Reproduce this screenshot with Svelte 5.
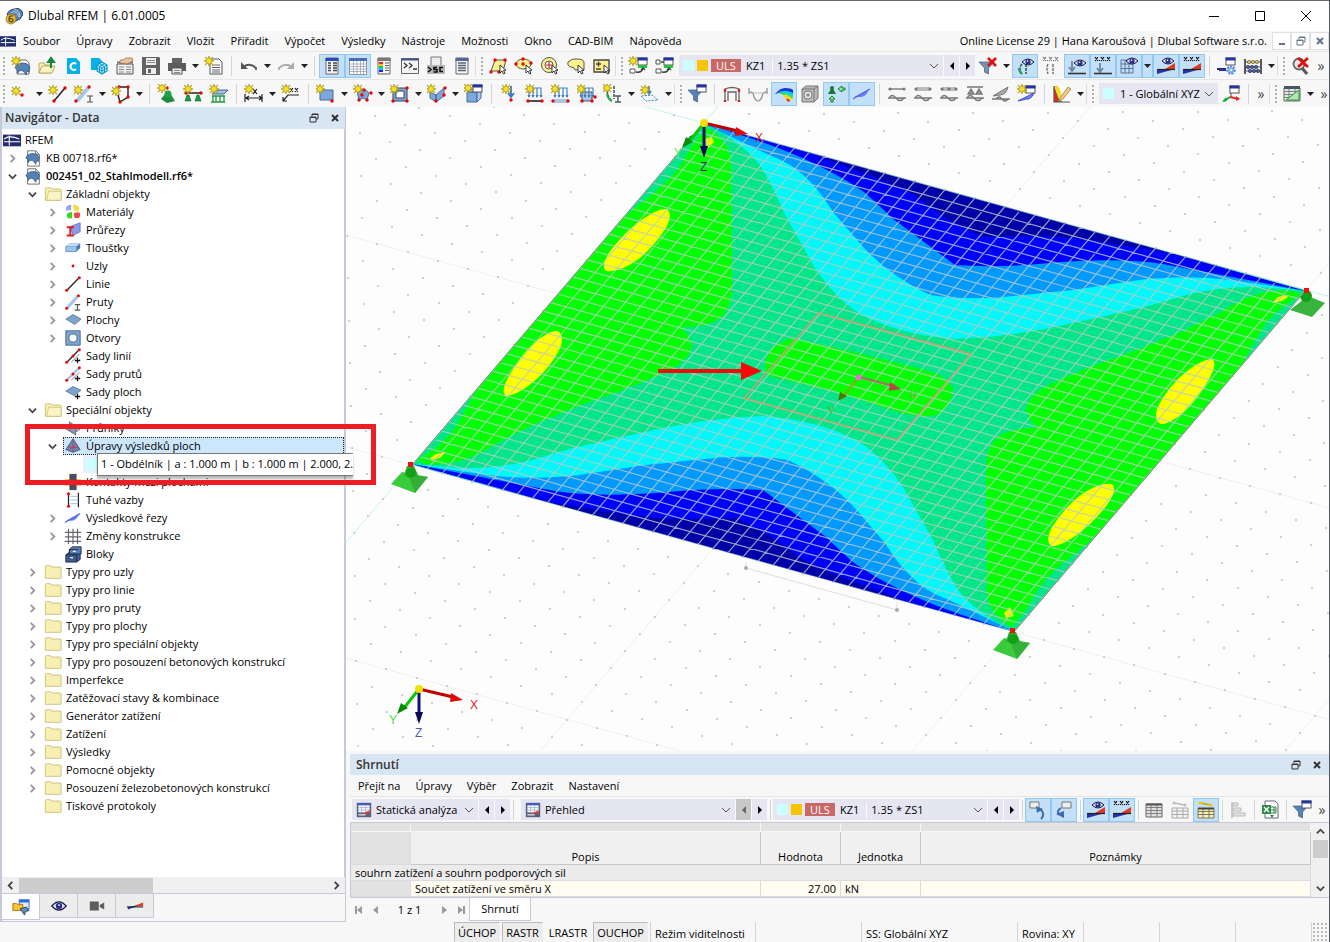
<script lang="ts">
	interface Tool {
		kind: string;
		icon?: string;
		on?: boolean;
	}

	interface Row {
		level: number;
		icon: string;
		label: string;
		state?: 'open' | 'closed';
		bold?: boolean;
		selected?: boolean;
	}

	// --- icon building blocks, all on a 20 x 20 grid ---
	const star = (x: number, y: number) =>
		`<path transform="translate(${x} ${y})" d="M0-5 1-2 4-4 2-1 5 0 2 1 4 4 1 2 0 5-1 2-4 4-2 1-5 0-2-1-4-4-1-2Z" fill="#f6e020" stroke="#a89418" stroke-width=".7"/>`;
	const dot = (x: number, y: number) => `<circle cx="${x}" cy="${y}" r="1.7" fill="#e00808"/>`;
	const dots = (...p: number[][]) => p.map(([x, y]) => dot(x, y)).join('');
	const win = (x: number, y: number) =>
		`<rect x="${x}" y="${y}" width="9" height="7" fill="#fff" stroke="#555"/><path d="M${x - 0.5} ${y + 1}h10" stroke="#2434a0" stroke-width="3"/>`;
	const cursor = (x: number, y: number) =>
		`<path transform="translate(${x} ${y})" d="M0 0v8l2-2 1.5 3 1.5-.7-1.5-3H6Z" fill="#fff" stroke="#222" stroke-width=".9"/>`;
	const eye = (x: number, y: number) =>
		`<path transform="translate(${x} ${y})" d="M-6 0Q0-6 6 0 0 6-6 0Z" fill="#dfe2f4" stroke="#181840"/><circle cx="${x}" cy="${y}" r="2.6" fill="#263090"/><circle cx="${x - 0.5}" cy="${y - 0.8}" r=".8" fill="#fff"/>`;
	const xxx = (c = '#111') =>
		`<path d="m2 1 3 4m0-4-3 4m6-4 3 4m0-4-3 4m6-4 3 4m0-4-3 4" stroke="${c}" stroke-width="1.2"/><path d="M6 4h1v1H6zm6 0h1v1h-1z" fill="${c}"/>`;
	const wedge = '<path d="M1 18v-5h18Z" fill="#2434b0"/><path d="M9 13 19 7v6Z" fill="#e03a20"/><path d="M1 13.5h18" stroke="#222" stroke-width="1.2"/>';
	const arrows = '<path d="M4 13V4h12v9M8 4v9m4-9v9" fill="none" stroke="#4a84c8" stroke-width="1.2"/><path d="m2.500 11 1.500 3 1.500-3m1 0L8 14l1.500-3m1 0 1.500 3 1.500-3m1 0 1.500 3 1.500-3" fill="#3a78c0"/>';
	const funnel = (c = '#5580b8') => `<path d="M1 6h15l-5.500 6v6l-4-2v-4Z" fill="${c}" stroke="#4a6a98" stroke-width=".8"/>`;
	const page = (tone: string) =>
		`<path d="M4 2h12v16H4Z" fill="#f4f4f4" stroke="#667"/><path d="M3.5 3.5h13" stroke="${tone}" stroke-width="3"/>`;
	const leaf = '<path d="M2 9q2-5 8-5 5 0 7 4l-1 5-2-1-1 4q-3-6-7-4l-1 2-1-4Z" fill="#5581b5" stroke="#34557f" stroke-width=".8"/>';
	const folder = (c = '#f8efb4') =>
		`<path d="M1.5 5.500V4q0-1 1-1h5l1.500 1.500h9q1 0 1 1v11q0 .5-.5.5h-17Z" fill="${c}" stroke="#c9bd72"/>`;
	const wave = '<path d="M1 14h18M2 14q3-5 7 0t8 0" fill="none" stroke="#777" stroke-width="1.400"/>';
	const cone = (x: number, y: number) =>
		`<path d="M${x - 3} ${y + 6} ${x - 1} ${y}h2l2 6Z" fill="#1f9a44" stroke="#0f6228" stroke-width=".6"/>`;
	const table = (c: string) =>
		`<path d="M2 4h16v13H2Z" fill="${c}" stroke="#666"/><path d="M2 7.500h16M2 10.500h16M2 13.500h16M7 4v13m6-13v13" stroke="#777" stroke-width=".9"/>`;
	const mesh = '<path d="M2 4h12v13H2Zm0 4h12M2 12.500h12M6 4v13m4-13v13" fill="#c3dbf4" stroke="#4c6c94" stroke-width=".9"/>';

	const icons: Record<string, string> = {
		newModel: `<path d="M6 4h9l3 3v11H6Z" fill="#fff" stroke="#666"/><g transform="translate(2 3)">${leaf}</g>${star(5, 5)}`,
		open: '<path d="M2 17V8q0-1 1-1h4l1 2h6v8Z" fill="#f8efb4" stroke="#b8ab5c"/><path d="M2 17 5 10h13l-3 7Z" fill="#fbf4c4" stroke="#b8ab5c"/><path d="M14 12V5M11 6l3-4 3 4Z" stroke="#16883c" stroke-width="2" fill="#16883c"/>',
		cloud: '<path d="M4 2h9l4 4v12H4Z" fill="#06b0e8"/><path d="M13 8a3.300 3.300 0 1 0 0 5" fill="none" stroke="#fff" stroke-width="2"/>',
		cloudModel: '<path d="M2 2h8l3 3v9H2Z" fill="#06b0e8"/><path d="m13 6 5 3v6l-5 3-5-3V9Z" fill="#bdeaf8" stroke="#0b98cc" stroke-width="1.200"/><path d="m8 9 5 3 5-3m-5 3v6M10.500 7.500l5 3v6m0-9-5 3v6M8 12l5 3 5-3" stroke="#0b98cc" fill="none"/>',
		template: '<path d="M2 8h16v10H2Z" fill="#f0f0f0" stroke="#555"/><path d="M2 6.500h16" stroke="#777" stroke-width="2"/><path d="M4 11h5m-5 2.500h5M4 16h5m2-5h5m-5 2.500h5m-5 2.500h5" stroke="#888"/><path d="M5 7q-1-4 3-3l3-2h6l1 3-6 3Z" fill="#eec39c" stroke="#8a6242" stroke-width=".7"/>',
		save: '<path d="M1 1h17l1 1v17H1Z" fill="#636363"/><path d="M5 2h10v7H5Zm0 10h10v6H5Z" fill="#eee"/><path d="M6 4.500h8M6 6.500h8" stroke="#888"/><path d="M7 13h3v4H7Z" fill="#636363"/>',
		print: '<path d="M5 2h10v5H5Z" fill="#666"/><path d="M1 7h18v8H1Z" fill="#5c5c5c"/><path d="M5 12h10v6H5Z" fill="#eee" stroke="#555"/><path d="M7 14.500h6M7 16.500h6" stroke="#888"/>',
		newReport: `<path d="M6 3h9l3 3v12H6Z" fill="#fff" stroke="#555"/><path d="M8 9h8m-8 2.500h8M8 14h8m-8 2h8" stroke="#666"/>${star(5, 5)}`,
		undo: '<path d="M4 11q7-5 13 1v2" fill="none" stroke="#555" stroke-width="1.800"/><path d="M2 6v7h7Z" fill="#555"/>',
		redo: '<path d="M16 11q-7-5-13 1v2" fill="none" stroke="#aaa" stroke-width="1.800"/><path d="M18 6v7h-7Z" fill="#aaa"/>',
		navPanel: `${page('#2b49b8')}<path d="M6 7h3m2 0h4M6 9.500h3m2 0h4M6 12h3m2 0h4m-9 2.500h3m2 0h4" stroke="#444" stroke-width="1.300"/>`,
		tablePanel: '<path d="M1.500 2.500h17v16h-17Z" fill="#fff" stroke="#8a98a8"/><path d="M1 3.500h18" stroke="#4a6cb8" stroke-width="3"/><path d="M2 8h16M2 10.500h16M2 13h16M2 15.500h16M5.500 5v13M9 5v13m3.500-13v13m3-13v13" stroke="#9aa4b0" stroke-width=".8"/>',
		colorPanel: `${page('#777')}<path d="M5 6h4v2H5Z" fill="#e22"/><path d="M5 8h4v2H5Z" fill="#fc0"/><path d="M5 10h4v2H5Z" fill="#1c4"/><path d="M5 12h4v2H5Z" fill="#0cf"/><path d="M5 14h4v2H5Z" fill="#22d"/><path d="M11 7h4m-4 2.500h4M11 12h4m-4 2.500h4" stroke="#666"/>`,
		console: '<path d="M1.500 2.500h17v15h-17Z" fill="#f4f4f4" stroke="#666"/><path d="M1 3.500h18" stroke="#445490" stroke-width="2"/><path d="m4 7 3 2.500L4 12m5-5 3 2.500L9 12m4 1h4" fill="none" stroke="#333" stroke-width="1.300"/>',
		script: '<path d="M5 1h10v9H5Z" fill="#eee" stroke="#777"/><path d="M1 9h18v9H1Z" fill="#b8b8b8"/><path d="m2 11 3 2.500L2 16M11 11.500H8v2h3v2.500H7.500M17 11.500h-3v4h3" fill="none" stroke="#111" stroke-width="1.600"/>',
		listPanel: `${page('#5468a0')}<path d="M6 7h8m-8 2.500h8M6 12h8m-8 2.500h8" stroke="#567" stroke-width="1.300"/>`,
		selPoly: `<path d="M7 4h11l-3 11H3Z" fill="#fbf08c" stroke="#555"/>${dots([7, 4], [17, 4], [3, 16], [11, 16])}${cursor(12, 9)}`,
		selEllipse: `<ellipse cx="9.500" cy="8" rx="7.500" ry="5" fill="#fbf08c" stroke="#555"/>${dots([9, 3], [2, 8], [9, 8], [17, 7])}${cursor(12, 9)}`,
		selRing: `<circle cx="9" cy="9" r="7.500" fill="#fbf08c" stroke="#555"/><circle cx="9" cy="9" r="4" fill="#fff" stroke="#555"/><path d="M9 6v6M6 9h6" stroke="#d22" stroke-width="1.200"/>${cursor(12, 9)}`,
		selFree: `<path d="M2 6q4-4 9-3 6 0 7 3v8H9q0-3-4-3-4-1-3-5Z" fill="#fbf08c" stroke="#555"/>${cursor(12, 9)}`,
		selCalc: `<path d="M2 4h15v12H2Z" fill="#fbf08c" stroke="#444" stroke-width="1.300"/><path d="M4 8h5M6.500 5.500v5M4 13h5" stroke="#444" stroke-width="1.400"/>${cursor(12, 9)}`,
		window1: `<path d="M2 13h5v4H2Z" fill="#fff" stroke="#555"/>${win(10, 2)}<path d="M10 9h9v3h-9Z" fill="#24c43c"/>${star(5, 5)}<path d="M8 16q6 1 7-4m-2 2 2-2 2 2" stroke="#444" fill="none" stroke-width="1.500"/>`,
		window2: `<path d="M2 4h4v4H2Zm0 9h5v4H2Z" fill="#fff" stroke="#555"/>${win(10, 2)}<path d="M10 9h9v3h-9Z" fill="#24c43c"/><path d="M7 6h3M8 16q6 1 7-4m-2 2 2-2 2 2" stroke="#444" fill="none" stroke-width="1.500"/>`,
		filterX: `${funnel('#7890ac')}<path d="m10 2 8 8m0-8-8 8" stroke="#e01010" stroke-width="2.600"/>`,
		eyeCurve: `<path d="M7 8q-4 4 0 10M11 8v10" fill="none" stroke="#1b5a34" stroke-width="1.500" stroke-dasharray="3 1"/><path d="M4 12q0 4 3 6" stroke="#20a050" stroke-width="2" fill="none"/>${eye(13, 6)}`,
		xxxCurve: `${xxx('#777')}<path d="M7 8q-2 4 0 10M12 8v10" fill="none" stroke="#777" stroke-width="1.500" stroke-dasharray="3 1"/>`,
		eyeArrow: `<path d="M5 5v9m-3-3 3 4 3-4" stroke="#6888a8" stroke-width="1.800" fill="none"/><path d="M1 17.500h18" stroke="#333" stroke-width="1.600"/>${eye(13, 7)}`,
		xxxArrow: `${xxx()}<path d="M7 7v8m-3-3 3 4 3-4" stroke="#6888a8" stroke-width="1.800" fill="none"/><path d="M1 17.500h18" stroke="#333" stroke-width="1.600"/>`,
		eyeGrid: `${mesh}${eye(13, 5)}`,
		eyeDiagram: `${wedge}${eye(12, 5)}`,
		xxxDiagram: `${wedge}${xxx()}`,
		windowGear: `${win(9, 2)}<path d="M0 12h9v2H0Z" fill="#333"/><path d="M2 14h7" stroke="#2434b0" stroke-width="2"/><circle cx="14" cy="14" r="3.500" fill="none" stroke="#5590d8" stroke-width="2.600" stroke-dasharray="2 1"/><circle cx="14" cy="14" r="2.200" fill="#cfe2f6" stroke="#5590d8"/>`,
		abacus: '<path d="M2 3v15M18 3v15" stroke="#333" stroke-width="1.600"/><path d="M2 6h16M2 11h16M2 15h16" stroke="#555"/><g fill="#d8c04c" stroke="#554" stroke-width=".6"><circle cx="6" cy="6" r="1.700"/><circle cx="10" cy="6" r="1.700"/><circle cx="14" cy="6" r="1.700"/></g><g fill="#4a60a8" stroke="#223" stroke-width=".6"><circle cx="5" cy="11" r="1.700"/><circle cx="9" cy="11" r="1.700"/><circle cx="13" cy="11" r="1.700"/><circle cx="7" cy="15" r="1.700"/><circle cx="11" cy="15" r="1.700"/><circle cx="15" cy="15" r="1.700"/></g>',
		zoomX: '<circle cx="9" cy="8" r="5.500" fill="#e8e8e8" stroke="#666" stroke-width="1.800"/><path d="m12 12 5 6" stroke="#555" stroke-width="3"/><path d="m8 2 10 9m0-9L8 11" stroke="#e01010" stroke-width="2.800"/>',
		nodeNew: `${star(5, 7)}${dot(11, 11)}`,
		lineNew: `<path d="M6 17 17 4" stroke="#222" stroke-width="1.500"/>${dots([6, 17], [17, 4])}${star(5, 6)}`,
		memberNew: `<path d="M3 17 14 4" stroke="#a9c6ea" stroke-width="4"/>${dots([2, 17], [15, 3])}<path d="M13 12h6m-6 6h6m-3-6v6" stroke="#555" stroke-width="1.200"/>${star(4, 6)}`,
		polyNew: `<path d="M8 3h9v10L9 18l-2-7" fill="none" stroke="#222" stroke-width="1.400"/>${dots([8, 3], [17, 3], [17, 13], [9, 18])}${star(5, 7)}`,
		supNode: `<path d="m9 9-5 6 6 4 8-2-5-8Z" fill="#1d8a3c"/><circle cx="11" cy="10" r="3.500" fill="#21a34a"/>${dot(10, 4)}${star(5, 4)}`,
		supLine: `<path d="M3 9h15" stroke="#222" stroke-width="1.500"/>${cone(5, 11)}${cone(15, 11)}${dots([3, 9], [18, 9])}${star(5, 5)}`,
		supSurf: `<path d="M3 10 7 6h12l-4 4Z" fill="#9dc0ea" stroke="#44668c"/><path d="M3 12h13M4 12v6m3-6v6m4-6v6m4-6v6M2 18h14" stroke="#1f9a44" stroke-width="1.300"/>${star(5, 5)}`,
		dimX: `<path d="M1 10v8m17-8v8M2 14h15M5 12l-3 2 3 2m10-4 3 2-3 2M9 5l4 5m0-5-4 5" stroke="#222" stroke-width="1.200" fill="none"/>${star(5, 5)}`,
		dimXX: `<path d="M2 17 7 11h11M2 13v4h4M9 4l3 4m0-4L9 8m5-4 3 4m0-4-3 4" stroke="#222" stroke-width="1.200" fill="none"/>${star(5, 5)}`,
		surfNew: `<path d="M4 6h13v10H4Z" fill="#7ca8dc" stroke="#466c9c"/>${dots([16, 17])}${star(4, 5)}`,
		surfCurved: `<path d="M4 7q7-4 12 2l-2 7-4-2-4 2Z" fill="#7ca8dc" stroke="#466c9c"/>${dots([6, 16], [18, 9], [14, 16], [11, 6], [9, 11])}${star(5, 5)}`,
		openingNew: `<path d="M3 4h14v13H3Z" fill="#7ca8dc" stroke="#345"/><path d="M6 7h8v7H6Z" fill="#fff" stroke="#345"/>${dots([3, 17], [17, 17], [17, 4])}${star(4, 5)}`,
		foldNew: `<path d="m3 8 6 3v7l-6-4Zm6 3 8-7v8l-8 6Z" fill="#7ca8dc" stroke="#466c9c"/>${dots([9, 17], [18, 4], [17, 11])}${star(4, 5)}`,
		solidNew: `<path d="M3 8h10v10H3Z" fill="#7ca8dc" stroke="#466c9c"/><path d="m3 8 3-3h11v9l-4 4V8Z" fill="#a7c7ec" stroke="#466c9c"/>${win(9, 1)}${star(4, 4)}`,
		loadNode: `<path d="M12 2v10m-3-3 3 4 3-4" stroke="#3a78c0" stroke-width="1.800" fill="none"/>${dot(12, 16)}${star(7, 5)}`,
		loadLine: `${arrows}<path d="M3 17h14" stroke="#222" stroke-width="1.600"/>${dots([3, 17], [17, 17])}${star(5, 5)}`,
		loadMember: `${arrows}<path d="M3 17h14" stroke="#a9c6ea" stroke-width="4"/>${dots([2, 17], [17, 17])}${star(4, 5)}`,
		loadSolid: `<path d="M5 8h10v9H5Z" fill="#a9c6ea" stroke="#456"/>${arrows}${dots([5, 17], [15, 17], [18, 13])}${star(4, 5)}`,
		curveI: `<path d="M6 3q-4 8 3 14M11 2v13" fill="none" stroke="#234" stroke-width="1.300" stroke-dasharray="3 1"/><path d="M4 10q1 5 5 7" stroke="#1fae4a" stroke-width="2" fill="none"/><path d="M12 12h6m-6 6h6m-3-6v6" stroke="#555" stroke-width="1.400"/>${star(4, 4)}`,
		loadFree: `<path d="M9 2v7m-2-2 2 3 2-3" stroke="#3a78c0" stroke-width="1.600" fill="none"/><path d="m1 12 5 5 12-1-6-5Z" fill="none" stroke="#2a90d0" stroke-dasharray="2 1.200"/>${star(5, 6)}`,
		filterWin: `${funnel()}${win(10, 1)}`,
		frame: '<path d="M3 17V5q7-3 14 0v12M6 17V8h8v9" fill="none" stroke="#666" stroke-width="1.300"/><path d="M3 5v3m14-3v3M3 16v2m14-2v2" stroke="#d22" stroke-width="2.400"/>',
		diagram: '<path d="M1 4v5q4-3 5 4 4 8 8 0 1-7 5-4V4" fill="none" stroke="#888" stroke-width="1.200"/><path d="M1 9h18" stroke="#bbb"/>',
		contour: '<path d="M1 10q5-6 10-6 6 0 8 2v6q-8-6-18-2Z" fill="#1830d8"/><path d="M1 10q9-6 18-1v4Q9 6 1 10Z" fill="#0ad0f0"/><path d="M5 9q8-1 14 4l-1 2q-4-5-9-4Z" fill="#3be040"/><path d="M9 11q6 0 9 4l-2 2q-2-3-4-2Z" fill="#f8d810"/><path d="m12 15 2 3 2-1q-1-3-4-2Z" fill="#e22"/>',
		cube: '<path d="m2 5 4-3h12v12l-4 4H2Z" fill="#b8b8b8" stroke="#777"/><path d="M2 5h12v13M14 5l4-3" stroke="#777" fill="none"/><circle cx="8" cy="11" r="4" fill="#eee" stroke="#777"/><circle cx="8" cy="11" r="1.800" fill="#888"/>',
		support: '<path d="m2 10 4-7 4 7Z" fill="#167a34"/><circle cx="6" cy="4" r="2" fill="#167a34"/><path d="m12 5 4-3v2h3v2h-3v2ZM6 12l3 3H7v3H5v-3H3Z" fill="#8af09c" stroke="#167a34"/>',
		section: '<path d="m2 13 15-8q-2 7-8 8Z" fill="#6a80f0"/><path d="m1 15 17-10" stroke="#5068e0" fill="none" stroke-width="1.300"/>',
		resLine: `<path d="M3 5h14" stroke="#777" stroke-width="1.400"/><circle cx="3" cy="5" r="1.600" fill="#777"/><circle cx="17" cy="5" r="1.600" fill="#777"/>${wave}`,
		resMember: `<path d="M3 5h14" stroke="#bbb" stroke-width="4"/><circle cx="3" cy="5" r="1.600" fill="#777"/><circle cx="17" cy="5" r="1.600" fill="#777"/>${wave}`,
		resSet: `<path d="M3 5h14" stroke="#bbb" stroke-width="4"/><circle cx="3" cy="5" r="1.600" fill="#777"/><circle cx="10" cy="5" r="1.600" fill="#777"/><circle cx="17" cy="5" r="1.600" fill="#777"/>${wave}`,
		resSup: `<path d="M2 3h16M3 10l3-5 3 5Zm8 0 3-5 3 5Z" stroke="#777" stroke-width="1.400" fill="#999"/>${wave}`,
		resSec: '<path d="m2 12 15-9q-2 8-8 8Z" fill="#aaa" stroke="#777"/><path d="M1 15h18M5 15q3-4 6 0t6 0" fill="none" stroke="#777" stroke-width="1.300"/>',
		secNew: `<path d="M1 17 17 9q-3 7-8 6Z" fill="#6a80f0" stroke="#3a50d8"/>${win(9, 2)}${star(5, 5)}`,
		palette: '<path d="M2 2h16v16H2Z" fill="#fff"/><path d="M2 2v16h8Z" fill="#1a4"/><path d="M2 2h3l5 10-2 6Z" fill="#f6e020"/><path d="M2 2h4l4 8Z" fill="#fc2"/><path d="M2 2 7 18H2Z" fill="#e22"/><path d="m8 14 8-11 3 2-8 10-4 2Z" fill="#f4c890" stroke="#a87838" stroke-width=".8"/><path d="M2 2v16h16" stroke="#555" fill="none" stroke-width="1.200"/>',
		axes: `${win(9, 2)}<path d="M10 9v4" stroke="#555"/><path d="m9 13 9 2" stroke="#e22" stroke-width="2"/><path d="m9 13-6 4" stroke="#1a4" stroke-width="2"/><path d="m15 12 4 3-4 2Z" fill="#e22"/><path d="m5 13-4 5 5-1Z" fill="#1a4"/>`,
		tableTri: `${table('#dfe8df')}<path d="M2 3.500h16" stroke="#456" stroke-width="3"/><path d="M4 16h13V6Z" fill="#b6e6b8" stroke="#2b9a3c"/>`,
		dockUp: '<path d="M2 2h9v6H2Z" fill="#eee" stroke="#777"/><path d="M12 9q6 5 1 10" fill="none" stroke="#3a70a8" stroke-width="2"/><path d="m8 6 1 7 6-4Z" fill="#3a70a8"/>',
		dockDown: '<path d="M8 2h9v6H8Z" fill="#eee" stroke="#777"/><path d="M7 8q-5 3-2 7" fill="none" stroke="#3a70a8" stroke-width="2"/><path d="m2 14 8 4V11Z" fill="#3a70a8"/>',
		tableGray: `${table('#e0e0e0')}<path d="M2 4.500h16" stroke="#555" stroke-width="2"/>`,
		tableLink: '<path d="m5 3 9 2" stroke="#bbb" stroke-width="1.500"/><circle cx="4" cy="3" r="1.500" fill="#bbb"/><circle cx="15" cy="5" r="1.500" fill="#bbb"/><path d="M2 8h16v10H2Zm0 3h16M2 14.500h16M7 8v10m6-10v10" fill="#f4f4f4" stroke="#aaa"/>',
		tableLinkOn: '<path d="m5 3 9 2" stroke="#c8a800" stroke-width="1.500"/><circle cx="4" cy="3" r="1.600" fill="#f4c800"/><circle cx="15" cy="5" r="1.600" fill="#f4c800"/><path d="M2 8.500h16v9.500H2Zm0 3h16M2 14.500h16M7 8v10m6-10v10" fill="#fdf09c" stroke="#777"/><path d="M2 8.500h16" stroke="#444" stroke-width="2"/>',
		bars: '<path d="M3 2v16h2V2Z" fill="#ccc"/><path d="M5 3h5v3H5Zm0 5h8v3H5Zm0 5h12v3H5Z" fill="#e4e4e4" stroke="#bbb"/>',
		excel: '<path d="M5 1h10l3 3v14H5Z" fill="#fff" stroke="#667"/><path d="M2 5h9v9H2Z" fill="#2f8a48"/><path d="m4 7 5 5m0-5-5 5" stroke="#fff" stroke-width="1.300"/><path d="M11 7h5v6h-5m0-3h5m-2-3v6" stroke="#2f8a48" fill="none"/><path d="m10 15 2 3 2-3Z" fill="#2f8a48"/>',
		app: '<path d="M0 4h20v13H0Z" fill="#232c6c"/><path d="M1 12h18M7 5v11M1 9q6-5 17 0" stroke="#fff" stroke-width="1.200" fill="none"/>',
		logo: '<path d="M3 9q1-5 7-6 5-2 8 2 2 4-2 8l-6 3Z" fill="#5c84ae" stroke="#27456c"/><path d="M7 7q5-4 8 4m-5-8q6 2 6 8" stroke="#c4d8ec" fill="none"/><circle cx="7" cy="13" r="5" fill="#e0b83c" stroke="#8c6a18" stroke-width=".7"/><path d="M9 10q-4-1-4 3 0 3 2 3t2-2-4-1" stroke="#5c4408" fill="none" stroke-width="1.200"/>',
		model: `<path d="M4 2h9l4 4v13H4Z" fill="#fff" stroke="#666"/><path d="M13 2v4h4" stroke="#666" fill="none"/><g transform="translate(0 1)">${leaf}</g>`,
		folder: folder(),
		folderOpen: `${folder()}<path d="M3 17 5 7h14v10Z" fill="#fbf4c4" stroke="#c9bd72" stroke-width=".8"/>`,
		materials: '<path d="M2 7q0-5 6-5v6H5Q2 9 2 7Z" fill="#9aa4ec"/><path d="M10 2q7 0 7 4t-4 3-3-7Z" fill="#ece04c"/><path d="M9 10v7q-6 1-6-3t6-4Z" fill="#3cd42c"/><path d="M11 11q7-2 7 2t-4 4-3-6Z" fill="#e84c4c"/>',
		sections: '<path d="M7 6 18 2v10l-8 4Z" fill="#8a9ae4" stroke="#4c5cb4" stroke-width=".7"/><path d="M3 7h8m-8 9h8M7 7v9" stroke="#e02020" stroke-width="2.200"/>',
		thickness: '<path d="m2 8 4-3h12v5l-4 4H2Z" fill="#4c7ab0"/><path d="M2 8h12v6H2Z" fill="#9cc4f0" stroke="#5c88bc" stroke-width=".7"/><path d="m2 8 4-3h12l-4 3Z" fill="#c4dcf6"/>',
		node: '<circle cx="10" cy="10" r="1.600" fill="#e00808"/>',
		line: `<path d="M4 16 16 4" stroke="#222" stroke-width="1.500"/>${dots([3, 17], [17, 3])}`,
		member: `<path d="M4 16 15 4" stroke="#a9c6ea" stroke-width="3.500"/>${dots([3, 17], [16, 3])}<path d="M12 13h6m-6 6h6m-3-6v6" stroke="#555" stroke-width="1.300"/>`,
		surface: '<path d="m2 9 8-5 9 5-7 6Z" fill="#7ca4cc" stroke="#476c94" stroke-width=".8"/>',
		opening: '<path d="M2 2h16v16H2Z" fill="#7ca4cc" stroke="#44688f"/><circle cx="10" cy="10" r="4.500" fill="#fff" stroke="#44688f"/>',
		lineSet: `<path d="M4 16 16 4" stroke="#222" stroke-width="1.500"/><path d="M8 17 17 8" stroke="#777"/>${dots([3, 17], [10, 10], [17, 3])}<path d="M15 12v6m-3-3h6" stroke="#111" stroke-width="1.400"/>`,
		memberSet: `<path d="M4 16 16 4" stroke="#a9c6ea" stroke-width="3"/><path d="M8 17 17 8" stroke="#777"/>${dots([3, 17], [10, 10], [17, 3])}<path d="M15 12v6m-3-3h6" stroke="#111" stroke-width="1.400"/>`,
		surfaceSet: '<path d="m2 9 8-5 9 4-8 6Z" fill="#7ca4cc" stroke="#476c94" stroke-width=".8"/><path d="M15 12v6m-3-3h6" stroke="#111" stroke-width="1.400"/>',
		intersect: '<path d="m2 11 7-4 9 4-7 5Z" fill="#9ab4cc" stroke="#567"/><path d="M6 3l7 5v10l-7-5Z" fill="#7c9cbc" stroke="#567" stroke-width=".8"/>',
		pyramid: '<path d="M10 2 2 14l8 3 8-3Z" fill="#6c88b4" stroke="#34466c" stroke-width=".8"/><path d="M10 2v15M4 11l12 1M6 14l8-6" stroke="#b44058" fill="none"/>',
		contact: '<path d="M1 7h18v7H1Z" fill="#f8a800"/><path d="M6 1h8v18H6Z" fill="#4c4c5c"/><path d="M6 8h8v4H6Z" fill="#e06020"/>',
		rigid: `<path d="M5 4v13M16 2v16" stroke="#222" stroke-width="1.400"/><path d="M7 6h8m-8 4h8m-8 4h8" stroke="#9cbce0"/>${dots([5, 3], [5, 17])}`,
		mesh: '<path d="M1 6h18M1 11h18M1 16h18M5 2v17m5-17v17m5-17v17" stroke="#667" stroke-width="1.300"/>',
		blocks: '<path d="m2 11 4-3h12v8l-4 3H2Z" fill="#3f5c8c" stroke="#1c2c4c"/><path d="m6 5 3-3h10v8H6Z" fill="#5a7cb0" stroke="#1c2c4c"/><path d="M2 11h12v8M6 10V5h10" stroke="#1c2c4c" fill="none"/><path d="M7 14h3m0-7h3" stroke="#fff" stroke-width="1.400"/>',
		tabData: '<path d="M8 2h11v10H8Z" fill="#e4ecf8" stroke="#2b5cc8"/><path d="M8 3.500h11" stroke="#2b6ce0" stroke-width="3"/><path d="M1 14V6h4l1 1h6v7Z" fill="#f4c430" stroke="#9a7410"/><path d="m9 12 7-2 3 4-4 1-1 4Z" fill="#5c8cc4" stroke="#345"/>',
		tabView: '<path d="M2 10Q10 1 18 10 10 19 2 10Z" fill="#dfe2f4" stroke="#181840" stroke-width="1.400"/><circle cx="10" cy="10" r="3.500" fill="#263090"/><circle cx="10" cy="9" r="1" fill="#fff"/>',
		tabCamera: '<path d="M2 5h10v10H2Zm11 4 5-3v8l-5-3Z" fill="#5c5c5c"/>',
		tabResults: '<path d="M2 14v-3l17-3Z" fill="#2434b0"/><path d="M9 10 19 6v4Z" fill="#e03a20"/><path d="M1 11h18" stroke="#222" stroke-width="1.200"/>',
		overview: '<path d="M1 1h18v18H1Z" fill="#5a5f80"/><path d="M3 4h14v9H3Z" fill="#fff"/><path d="M2 3h16" stroke="#3c5cc8" stroke-width="2"/><path d="M3 7h14M3 10h14M7 4v9m5-9v9" stroke="#a0b0d8"/><path d="m8 15 9-5v4Z" fill="#e04028"/><path d="M3 16h9" stroke="#ccc" stroke-width="2"/>'
	};

	// shorthand: "*name" is a pressed button, "v" a drop-down arrow, "|" a rule, "::" a grip
	const parse = (s: string): Tool[] =>
		s.split(' ').map((t) => {
			if (t === '|') return { kind: 'rule' };
			if (t === '::') return { kind: 'grip' };
			if (t === 'v') return { kind: 'caret' };
			if (t === '*v') return { kind: 'caret', on: true };
			if (t === '>>') return { kind: 'more' };
			if (t[0] === '*') return { kind: 'button', icon: t.slice(1), on: true };
			return { kind: 'button', icon: t };
		});

	const fileTools = parse(
		'newModel open cloud cloudModel template save print v newReport | undo v redo v | *navPanel *tablePanel colorPanel console script listPanel :: selPoly selEllipse selRing selFree selCalc :: window1 window2'
	);
	const viewTools = parse(
		'filterX v *eyeCurve xxxCurve *eyeArrow *xxxArrow *eyeGrid *v *eyeDiagram *xxxDiagram | windowGear abacus v :: zoomX >>'
	);
	const insertTools = parse(
		'nodeNew v lineNew memberNew v polyNew v | supNode supLine supSurf | dimX v dimXX | surfNew v surfCurved v openingNew v foldNew v solidNew | loadNode loadLine loadMember loadSolid curveI v loadFree v :: filterWin | frame diagram *contour cube *support *section | resLine resMember resSet resSup resSec secNew | palette v ::'
	);
	const axisTools = parse('axes | >> :: tableTri v >>');
	const summaryTools = parse(
		'| *dockUp *dockDown | *eyeDiagram *xxxDiagram | tableGray tableLink *tableLinkOn | bars | excel | filterWin >>'
	);

	const menu = ['Soubor', 'Úpravy', 'Zobrazit', 'Vložit', 'Přiřadit', 'Výpočet', 'Výsledky', 'Nástroje', 'Možnosti', 'Okno', 'CAD-BIM', 'Nápověda'];
	const summaryMenu = ['Přejít na', 'Úpravy', 'Výběr', 'Zobrazit', 'Nastavení'];

	const folders = [
		'Typy pro uzly', 'Typy pro linie', 'Typy pro pruty', 'Typy pro plochy', 'Typy pro speciální objekty',
		'Typy pro posouzení betonových konstrukcí', 'Imperfekce', 'Zatěžovací stavy & kombinace', 'Generátor zatížení',
		'Zatížení', 'Výsledky', 'Pomocné objekty', 'Posouzení železobetonových konstrukcí'
	];

	const rows: Row[] = [
		{ level: 0, icon: 'model', label: 'KB 00718.rf6*', state: 'closed' },
		{ level: 0, icon: 'model', label: '002451_02_Stahlmodell.rf6*', state: 'open', bold: true },
		{ level: 1, icon: 'folderOpen', label: 'Základní objekty', state: 'open' },
		{ level: 2, icon: 'materials', label: 'Materiály', state: 'closed' },
		{ level: 2, icon: 'sections', label: 'Průřezy', state: 'closed' },
		{ level: 2, icon: 'thickness', label: 'Tloušťky', state: 'closed' },
		{ level: 2, icon: 'node', label: 'Uzly', state: 'closed' },
		{ level: 2, icon: 'line', label: 'Linie', state: 'closed' },
		{ level: 2, icon: 'member', label: 'Pruty', state: 'closed' },
		{ level: 2, icon: 'surface', label: 'Plochy', state: 'closed' },
		{ level: 2, icon: 'opening', label: 'Otvory', state: 'closed' },
		{ level: 2, icon: 'lineSet', label: 'Sady linií' },
		{ level: 2, icon: 'memberSet', label: 'Sady prutů' },
		{ level: 2, icon: 'surfaceSet', label: 'Sady ploch' },
		{ level: 1, icon: 'folderOpen', label: 'Speciální objekty', state: 'open' },
		{ level: 2, icon: 'intersect', label: 'Průniky' },
		{ level: 2, icon: 'pyramid', label: 'Úpravy výsledků ploch', state: 'open', selected: true },
		{ level: 3, icon: '', label: '' },
		{ level: 2, icon: 'contact', label: 'Kontakty mezi plochami' },
		{ level: 2, icon: 'rigid', label: 'Tuhé vazby' },
		{ level: 2, icon: 'section', label: 'Výsledkové řezy', state: 'closed' },
		{ level: 2, icon: 'mesh', label: 'Změny konstrukce', state: 'closed' },
		{ level: 2, icon: 'blocks', label: 'Bloky' },
		...folders.map((label): Row => ({ level: 1, icon: 'folder', label, state: 'closed' })),
		{ level: 1, icon: 'folder', label: 'Tiskové protokoly' }
	];

	const tabs = ['tabData', 'tabView', 'tabCamera', 'tabResults'];
	let activeTab = $state('tabData');

	// plate corner and the two edge vectors in scene units
	const ox = 704, oy = 123;
	const ux = 602, uy = 167;
	const vx = -292, vy = 342;
	const at = (i: number, j: number) => [ox + (ux * i) / 20 + (vx * j) / 20, oy + (uy * i) / 20 + (vy * j) / 20];

	const seg = (a: number[], b: number[]) => `M${a.join(' ')}L${b.join(' ')}`;
	let meshPath = '';
	for (let k = 0; k <= 40; k++) {
		meshPath += seg(at(k / 2, 0), at(k / 2, 20)) + seg(at(0, k / 2), at(20, k / 2));
	}
	let gridPath = '';
	for (const k of [-10, 0, 10, 20, 30]) gridPath += seg(at(k, -15), at(k, 45)) + seg(at(-25, k), at(45, k));

	const points: number[][] = [];
	for (let i = -14; i < 42; i++) {
		for (let j = -22; j < 42; j++) {
			const [x, y] = at(i, j);
			if (x > 347 && x < 1330 && y > 107 && y < 752) points.push([x, y]);
		}
	}
</script>

{#snippet pic(name: string)}
	<svg class="pic" viewBox="0 0 20 20" aria-hidden="true">{@html icons[name]}</svg>
{/snippet}

{#snippet chevron()}
	<svg class="chev" viewBox="0 0 10 6" aria-hidden="true"><path d="m1 1 4 4 4-4" /></svg>
{/snippet}

{#snippet toolset(tools: Tool[])}
	{#each tools as tool}
		{#if tool.kind === 'button'}
			<button class="tool" class:on={tool.on} aria-label={tool.icon}>{@render pic(tool.icon ?? '')}</button>
		{:else if tool.kind === 'caret'}
			<button class="caret" class:on={tool.on} aria-label="Další"><svg viewBox="0 0 7 4"><path d="M0 0h7L3.500 4Z" /></svg></button>
		{:else if tool.kind === 'more'}
			<button class="more" aria-label="Více">»</button>
		{:else}
			<span class={tool.kind}></span>
		{/if}
	{/each}
{/snippet}

{#snippet stepper(dim: boolean)}
	<button class="step" class:dim aria-label="Předchozí"><svg viewBox="0 0 4 8"><path d="M4 0v8L0 4Z" /></svg></button>
	<button class="step" aria-label="Další"><svg viewBox="0 0 4 8"><path d="M0 0v8l4-4Z" /></svg></button>
{/snippet}

{#snippet loadCombo()}
	<span class="swatch cyan"></span>
	<span class="swatch amber"></span>
	<span class="uls">ULS</span>
	<span class="code">KZ1</span>
	<select aria-label="Kombinace zatížení"><option>1.35 * ZS1</option></select>
	{@render chevron()}
{/snippet}

{#snippet restore()}
	<svg class="glyph" viewBox="0 0 10 10"><path d="M3 3V1h6v5H7M1 4h6v5H1Z" /><path d="M1 4.500h6M3 1.500h6" /></svg>
{/snippet}

{#snippet cross()}
	<svg class="glyph bold" viewBox="0 0 10 10"><path d="m2 2 6 6m0-6-6 6" /></svg>
{/snippet}

{#snippet support(x: number, y: number)}
	<g transform="translate({x} {y})">
		<path d="M-20 18-9 6 17 11 4 27Z" fill="#38cc3c" />
		<path d="M-3 8 17 11 4 27Z" fill="#34b038" />
		<path d="M-4 0h7l4 9q-7 5-14 0Z" fill="#28b02c" />
		<circle cx="0" cy="7" r="5" fill="#12a016" />
		<rect x="-3" y="-4" width="5" height="5" fill="#f01010" />
	</g>
{/snippet}

{#snippet triad(x: number, y: number)}
	<g transform="translate({x} {y})">
		<path d="m0 0 34 8" stroke="#c00000" stroke-width="3" /><path d="m32 4 12 7-13 2Z" fill="#e00808" />
		<path d="m0 0-15 19" stroke="#08c808" stroke-width="3" /><path d="m-18 14-4 11 11-6Z" fill="#088c08" />
		<path d="M0 0v24" stroke="#101070" stroke-width="3" /><path d="M-4 23h8L0 35Z" fill="#0a0a58" />
		<circle r="4" fill="#f0e000" />
	</g>
{/snippet}

<!-- half of the contour plot; the other half is the same turned about the plate centre -->
{#snippet half()}
	<path fill="#00ff00" d="M706 128Q726 138 731 158L732 255 732 290Q731 312 716 321 700 328 681 327 690 335 692 346 690 358 675 367 640 385 586 403L537 423 497 443Q465 464 440 464 420 466 418 459 440 447 452 432 465 412 477 388L620 220 650 196Q680 172 690 148Z" />
	<path fill="#00f8f8" d="M704 124Q740 140 760 165 775 190 785 215L815 268Q835 298 860 314 900 335 955 339 1014 337 1073 323L1141 308 1186 295Q1231 284 1272 288L1306 291Z" />
	<path fill="#0099ff" d="M704 124 769 155Q790 163 801 173 820 190 833 212L864 248Q890 276 930 295 970 301 1014 296L1073 290 1132 281Q1182 274 1231 280L1306 291Z" />
	<path fill="#0000ff" d="M704 123 756 140Q820 162 864 192 880 206 892 218L955 265Q1000 268 1050 263 1118 257 1163 264L1306 291Z" />
	<path fill="#0000a8" d="M790 147 815 155 874 177Q900 187 914 195L946 218 982 237Q1050 234 1095 241L1163 252 1240 272Z" />
	<path fill="#ffff00" d="M667 209Q673 214 666 228 655 245 640 258 620 273 606 271 600 266 611 250 625 232 640 221 658 208 667 209Z" />
	<path fill="#ffff00" d="M557 331Q564 333 561 346 555 360 541 375 520 395 506 396 500 392 509 376 520 356 534 343 550 330 557 331Z" />
	<path fill="#f0f000" d="m704 139 8-2 2 5-6 6ZM430 458l6-4 10-2-6 6-8 2Z" />
{/snippet}

<div class="app">
	<header class="titlebar">
		{@render pic('logo')}
		<h1>Dlubal RFEM | 6.01.0005</h1>
		<button aria-label="Minimalizovat"><svg viewBox="0 0 10 10"><path d="M0 5.500h10" /></svg></button>
		<button aria-label="Maximalizovat"><svg viewBox="0 0 10 10"><path d="M.5.5h9v9h-9Z" /></svg></button>
		<button aria-label="Zavřít"><svg viewBox="0 0 10 10"><path d="m0 0 10 10M10 0 0 10" /></svg></button>
	</header>

	<nav class="menubar">
		{@render pic('app')}
		{#each menu as item}<button>{item}</button>{/each}
		<span class="license">Online License 29 | Hana Karoušová | Dlubal Software s.r.o.</span>
		<button class="mdi" aria-label="Minimalizovat okno"><svg class="glyph bold" viewBox="0 0 10 10"><path d="M2 8h6" /></svg></button>
		<button class="mdi" aria-label="Obnovit okno">{@render restore()}</button>
		<button class="mdi" aria-label="Zavřít okno">{@render cross()}</button>
	</nav>

	<div class="toolbar">
		<span class="grip first"></span>
		{@render toolset(fileTools)}
		<div class="combo load">{@render loadCombo()}</div>
		{@render stepper(false)}
		{@render toolset(viewTools)}
	</div>
	<div class="toolbar">
		<span class="grip first"></span>
		{@render toolset(insertTools)}
		<div class="combo axis">
			<span class="swatch cyan"></span>
			<select aria-label="Souřadný systém"><option>1 - Globální XYZ</option></select>
			{@render chevron()}
		</div>
		{@render toolset(axisTools)}
	</div>

	<div class="workspace">
		<aside class="navigator">
			<div class="dock-title">
				<h2>Navigátor - Data</h2>
				<button aria-label="Odpojit">{@render restore()}</button>
				<button aria-label="Zavřít">{@render cross()}</button>
			</div>
			<ul class="tree">
				<li class="row">{@render pic('app')}<span class="label">RFEM</span></li>
				{#each rows as row}
					<li class="row level{row.level}">
						{#if row.state}
							<button class="toggle {row.state}" aria-label={row.label}><svg viewBox="0 0 10 10"><path d="m3 1 4 4-4 4" /></svg></button>
						{:else}
							<span class="toggle"></span>
						{/if}
						<span class="entry" class:selected={row.selected} class:bold={row.bold}>
							{#if row.icon}
								{@render pic(row.icon)}<span class="label">{row.label}</span>
							{:else}
								<span class="swatch cyan"></span>
								<span class="tip">1 - Obdélník | a : 1.000 m | b : 1.000 m | 2.000, 2.</span>
							{/if}
						</span>
						{#if row.selected}<span class="frame"></span>{/if}
					</li>
				{/each}
			</ul>
			<div class="hscroll">
				<button aria-label="Doleva"><svg viewBox="0 0 10 10"><path d="M7 1 3 5l4 4" /></svg></button>
				<span class="thumb"></span>
				<button aria-label="Doprava"><svg viewBox="0 0 10 10"><path d="m3 1 4 4-4 4" /></svg></button>
			</div>
			<div class="tabs">
				{#each tabs as tab}
					<button class:active={activeTab === tab} aria-label={tab} onclick={() => (activeTab = tab)}>{@render pic(tab)}</button>
				{/each}
			</div>
		</aside>

		<main>
			<svg class="scene" viewBox="346 107 983 644" preserveAspectRatio="xMidYMid slice">
				<path d={gridPath} stroke="#f0f0f0" fill="none" />
				<path d={seg(at(0, -5), at(0, 30)) + seg(at(-5, 0), at(25, 0))} stroke="#c8f6f8" fill="none" />
				{#each points as [x, y]}<rect x={Math.round(x) - 1} y={Math.round(y) - 1} width="2" height="2" fill="#d0d0d0" />{/each}

				<path d="M683 145 690 136 702 131 700 146Z" fill="#088c08" />
				<g transform="translate(1306 290)"><path d="M-16 20 2 6 19 13 6 27Z" fill="#38b43c" /><circle cy="6" r="6" fill="#12a016" /></g>

				<clipPath id="plate"><path d="M704 123 1306 290 1014 632 412 465Z" /></clipPath>
				<g clip-path="url(#plate)">
					<path d="M704 123 1306 290 1014 632 412 465Z" fill="#00e688" />
					{@render half()}
					<g transform="rotate(180 859 377.500)">{@render half()}</g>
					<path fill="#00ff00" d="M765 370Q764 352 780 343 788 338 796 339L858 353 925 370Q953 378 953 392 947 418 925 416 910 416 898 412L836 392 773 377Q766 376 765 370Z" />
					<path d={meshPath} stroke="#bcc8c4" stroke-opacity=".8" stroke-width="1.200" fill="none" />
				</g>
				<path d="M704 123 412 465M1306 290 1014 632" stroke="#888" />

				<path d="M819 313 971 354 897 440 744 398Z" fill="none" stroke="#c8a070" stroke-width="1.500" />
				<path d="M746 562v6l151 42v-8" stroke="#ddd" fill="none" />
				<circle cx="746" cy="568" r="2" fill="#aaa" /><circle cx="897" cy="610" r="2" fill="#aaa" />
				<path d="M658 369h83v-7l21 9-21 9v-7h-83Z" fill="#f80808" />

				<path d="m859 377 34 9" stroke="#b06868" stroke-width="2" /><path d="m890 382 11 7-12 2Z" fill="#b84848" />
				<path d="m858 378-16 20" stroke="#88a800" stroke-width="2" /><path d="m838 401 2-9 7 4Z" fill="#487800" />
				<rect x="856" y="375" width="5" height="5" fill="#e868e8" />
				<text x="910" y="398" fill="#98a858">u</text>
				<text x="828" y="413" fill="#50b818">v</text>

				{@render support(411, 466)}
				{@render support(1013, 632)}
				<rect x="1304" y="288" width="5" height="5" fill="#f01010" />
				{@render triad(704, 123)}
				<text x="755" y="142" fill="#e02020">X</text>
				<text x="700" y="171" fill="#183858">Z</text>
				<text x="674" y="157" fill="#58f058">Y</text>
				{@render triad(419, 689)}
				<text x="470" y="709" fill="#e02020">X</text>
				<text x="415" y="737" fill="#5858b8">Z</text>
				<text x="389" y="724" fill="#40e040">Y</text>
			</svg>

			<section class="summary">
				<div class="dock-title">
					<h2>Shrnutí</h2>
					<button aria-label="Odpojit">{@render restore()}</button>
					<button aria-label="Zavřít">{@render cross()}</button>
				</div>
				<nav class="submenu">
					{#each summaryMenu as item}<button>{item}</button>{/each}
				</nav>
				<div class="toolbar sub">
					<div class="combo analysis">
						{@render pic('overview')}
						<select aria-label="Analýza"><option>Statická analýza</option></select>
						{@render chevron()}
					</div>
					{@render stepper(false)}
					<span class="rule"></span>
					<div class="combo overview">
						{@render pic('overview')}
						<select aria-label="Tabulka"><option>Přehled</option></select>
						{@render chevron()}
					</div>
					{@render stepper(true)}
					<span class="rule"></span>
					<div class="combo result">{@render loadCombo()}</div>
					{@render stepper(false)}
					{@render toolset(summaryTools)}
				</div>
				<div class="sheet">
					<table>
						<thead>
							<tr class="thin"><td class="corner"></td><td class="c1"></td><td class="c2"></td><td class="c2"></td><td></td></tr>
							<tr class="heads"><td class="corner"></td><th>Popis</th><th>Hodnota</th><th>Jednotka</th><th>Poznámky</th></tr>
						</thead>
						<tbody>
							<tr class="group"><td colspan="5">souhrn zatížení a souhrn podporových sil</td></tr>
							<tr><td class="corner"></td><td>Součet zatížení ve směru X</td><td class="num">27.00</td><td>kN</td><td></td></tr>
						</tbody>
					</table>
					<div class="vscroll">
						<button aria-label="Nahoru"><svg viewBox="0 0 10 10"><path d="m1 7 4-4 4 4" /></svg></button>
						<span class="thumb"></span>
						<button aria-label="Dolů"><svg viewBox="0 0 10 10"><path d="m1 3 4 4 4-4" /></svg></button>
					</div>
				</div>
				<div class="pager">
					<button aria-label="První"><svg viewBox="0 0 8 8"><path d="M0 0h2v8H0Zm7 0v8L2 4Z" /></svg></button>
					<button aria-label="Předchozí"><svg viewBox="0 0 8 8"><path d="M6 0v8L1 4Z" /></svg></button>
					<span class="count">1 z 1</span>
					<button aria-label="Další"><svg viewBox="0 0 8 8"><path d="m2 0 5 4-5 4Z" /></svg></button>
					<button aria-label="Poslední"><svg viewBox="0 0 8 8"><path d="M1 0l5 4-5 4Zm5 0h2v8H6Z" /></svg></button>
					<button class="sheet-tab">Shrnutí</button>
				</div>
			</section>
		</main>
	</div>

	<footer>
		<button class="snap pressed">ÚCHOP</button>
		<button class="snap pressed">RASTR</button>
		<button class="snap">LRASTR</button>
		<button class="snap pressed">OUCHOP</button>
		<span class="cell mode">Režim viditelnosti</span>
		<span class="cell gap"></span>
		<span class="cell system">SS: Globální XYZ</span>
		<span class="cell plane">Rovina: XY</span>
		<span class="cell"></span>
		<span class="cell"></span>
		<span class="cell"></span>
		<span class="cell end"></span>
	</footer>
</div>

<style>
	:global(body) { background: #f7f7f7; }

	.app {
		display: flex; flex-direction: column;
		height: 100vh; min-height: 600px;
		box-sizing: border-box;
		background: #f7f7f7; color: #000;
		border-top: 1px solid #666;
		border-right: 1px solid #556;
		font: 11px/16px "Open Sans", "Noto Sans", sans-serif;
		overflow: hidden;
	}
	h1, h2, ul { margin: 0; padding: 0; font: inherit; }
	button {
		background: none; border: none; padding: 0;
		font: inherit; color: inherit; white-space: nowrap;
	}
	button svg { display: block; }
	.pic { width: 20px; height: 20px; flex: none; }

	.titlebar { display: flex; align-items: center; height: 30px; flex: none; background: #fff; padding-left: 4px; }
	.titlebar h1 { flex: 1; margin-left: 4px; font-size: 12px; }
	.titlebar button { width: 46px; height: 30px; display: grid; place-items: center; }
	.titlebar button svg { width: 10px; height: 10px; fill: none; stroke: #000; overflow: visible; }

	.menubar { display: flex; align-items: center; height: 20px; flex: none; }
	.menubar .pic { width: 16px; }
	.menubar button { margin-left: 7px; margin-right: 9px; }
	.license { margin-left: auto; margin-right: 5px; }
	.menubar button.mdi {
		width: 19px; height: 18px; margin: 0;
		background: #fff; border: 1px solid #e0e0e0;
		color: #667488; display: grid; place-items: center;
	}
	.glyph { width: 10px; height: 10px; fill: none; stroke: currentColor; stroke-width: 1; }
	.glyph.bold { stroke-width: 2; }

	.toolbar {
		display: flex; align-items: center;
		height: 28px; flex: none; box-sizing: border-box;
		border-top: 1px solid #e6e6e6;
	}
	.tool {
		width: 26px; height: 24px; flex: none; box-sizing: border-box;
		display: grid; place-items: center;
	}
	.tool.on, .caret.on { background: #c4e0f8; border: 1px solid #90c8f4; }
	.caret { width: 11px; height: 24px; flex: none; box-sizing: border-box; display: grid; place-items: center; }
	.caret svg { width: 7px; height: 4px; fill: #222; }
	.rule { width: 9px; height: 20px; flex: none; background: linear-gradient(#d4d4d4, #d4d4d4) center / 1px 100% no-repeat; }
	.grip {
		width: 10px; height: 20px; flex: none;
		background: radial-gradient(circle, #b0b0b0 1px, transparent 1px) 4px 0 / 4px 4px repeat-y;
		border-left: 1px solid #dcdcdc; box-sizing: border-box;
	}
	.grip.first { width: 8px; border: none; background-position-x: 2px; }
	.more { width: 16px; flex: none; font-size: 14px; color: #444; }

	.combo {
		display: flex; align-items: center;
		height: 21px; flex: none; box-sizing: border-box;
		background: #e6e6f2; padding: 0 4px;
	}
	.combo select {
		flex: 1; min-width: 0; height: 21px;
		appearance: none; border: none; background: none;
		font: inherit; color: inherit; padding: 0 4px;
	}
	.combo .pic { width: 16px; height: 16px; }
	.chev { width: 10px; height: 6px; flex: none; fill: none; stroke: #555; }
	.swatch { width: 11px; height: 11px; flex: none; margin-right: 3px; }
	.swatch.cyan { background: #ccffff; }
	.swatch.amber { background: #f6c400; }
	.uls { width: 30px; line-height: 13px; text-align: center; background: #c96866; color: #fff; }
	.code { padding: 0 7px 0 5px; border-right: 1px solid #fafafa; }
	.load { flex: 1 1 240px; margin-left: 2px; }
	.axis { flex: 1 1 110px; margin-left: 3px; }
	.axis .swatch { margin-right: 2px; }
	.step {
		width: 16px; height: 21px; flex: none; box-sizing: border-box;
		background: #e6e6f2; border-left: 1px solid #fafafa;
		display: grid; place-items: center;
	}
	.step svg { width: 4px; height: 8px; }
	.step.dim { background: #c8c8c8; }
	.step.dim svg { fill: #666; }

	.workspace { display: flex; flex: 1; min-height: 0; }

	.navigator {
		width: 346px; flex: none;
		display: flex; flex-direction: column; box-sizing: border-box;
		border: solid #c8c8d8; border-width: 0 1px 1px 2px;
	}
	.dock-title { display: flex; align-items: center; height: 21px; flex: none; background: #d8e5f2; color: #333; }
	.dock-title h2 { flex: 1; font-size: 12px; font-weight: 600; }
	.dock-title button { width: 21px; display: grid; place-items: center; }
	.navigator .dock-title { height: 22px; padding-left: 3px; }

	.tree {
		flex: 1; min-height: 0; list-style: none;
		background: #fff; border-right: 1px solid #c8c8d8;
		padding-top: 2px;
	}
	.row { display: flex; align-items: center; height: 18px; position: relative; }
	.row .pic { width: 18px; height: 18px; margin: 0 4px 0 1px; }
	.level1 { padding-left: 20px; }
	.level2 { padding-left: 40px; }
	.level3 { padding-left: 60px; }
	.toggle { width: 21px; flex: none; display: grid; place-items: center; }
	.toggle svg { width: 9px; height: 9px; fill: none; stroke: #999; stroke-width: 2; }
	.toggle.open svg { transform: rotate(90deg); stroke: #444; }
	.entry { display: flex; align-items: center; flex: 1; height: 18px; box-sizing: border-box; }
	.label { white-space: nowrap; }
	.bold { font-weight: 600; }
	.selected { background: #cce6fc; outline: 1px dotted #222; outline-offset: -1px; }
	.level3 .entry { background: linear-gradient(90deg, #e5f1fb 20px, transparent 20px); }
	.level3 .swatch { margin-left: 3px; }
	.tip {
		position: absolute; left: 95px; top: -2px; z-index: 2;
		height: 19px; padding: 2px 0 0 3px; white-space: nowrap;
		background: #fff; border: 1px solid #777; border-right: none;
		box-shadow: 0 3px 2px #0004;
	}
	.frame {
		position: absolute; left: 23px; top: -13px; z-index: 3;
		width: 351px; height: 61px; box-sizing: border-box;
		border: 5px solid #ee1c24; pointer-events: none;
	}

	.hscroll { display: flex; align-items: center; height: 16px; flex: none; background: #f0f0f0; border-bottom: 1px solid #c8c8d8; }
	.hscroll button, .vscroll button { width: 17px; height: 17px; display: grid; place-items: center; }
	.hscroll svg, .vscroll svg { width: 9px; height: 9px; fill: none; stroke: #444; stroke-width: 2; }
	.hscroll .thumb { width: 39%; height: 15px; background: #cdcdcd; }
	.hscroll button:last-child { margin-left: auto; }
	.tabs { display: flex; align-items: flex-start; height: 27px; flex: none; }
	.tabs button {
		width: 38px; height: 24px; display: grid; place-items: center;
		background: #ececec; border: solid #c8c8d8; border-width: 0 1px 1px 0; box-sizing: border-box;
	}
	.tabs button.active { background: #fff; height: 26px; }
	.tabs .pic { width: 18px; height: 18px; }

	main { flex: 1; min-width: 0; display: flex; flex-direction: column; }
	.scene { flex: 1; min-height: 0; width: 100%; display: block; background: #fdfdfd; }
	.scene text { font: 12px "Liberation Sans", sans-serif; }

	.summary { flex: none; margin: 3px 0 0 4px; padding-bottom: 1px; }
	.summary .dock-title { padding: 0 2px 0 6px; }
	.submenu { display: flex; align-items: center; height: 21px; padding-left: 8px; gap: 15px; }
	.sub { padding-left: 2px; height: 26px; }
	.sub .rule { width: 6px; }
	.sub .more { width: 14px; }
	.analysis { flex: 0 1 126px; }
	.overview { flex: 1 1 200px; margin-left: 5px; }
	.result { flex: 1 1 200px; }

	.sheet { display: flex; border: solid #c8c8d8; border-width: 1px 0 1px 1px; }
	table { flex: 1; border-collapse: separate; border-spacing: 0; table-layout: fixed; width: 100%; }
	td, th {
		padding: 0 4px; border: solid #dcdce0; border-width: 0 1px 1px 0;
		height: 15px; line-height: 15px; box-sizing: border-box;
		font-weight: 400; background: #fffcf2;
	}
	th { background: #f0f0f0; vertical-align: bottom; border-color: #c8c8c8; }
	.thin td { height: 9px; line-height: 8px; background: #e2e2e2; border-color: #f8f8f8; }
	.thin .corner { width: 60px; }
	.thin .c1 { width: 350px; }
	.thin .c2 { width: 80px; }
	.heads td, .heads th { height: 33px; }
	td.corner { background: #e2e2e2; }
	.group td { background: #ebebeb; }
	.num { text-align: right; }
	.vscroll { width: 18px; flex: none; display: flex; flex-direction: column; align-items: center; background: #f0f0f0; }
	.vscroll .thumb { width: 15px; height: 18px; background: #cdcdcd; }
	.vscroll button:last-child { margin-top: auto; }

	.pager { display: flex; align-items: center; height: 23px; }
	.pager button { width: 17px; display: grid; place-items: center; }
	.pager button svg { width: 8px; height: 8px; fill: #999; }
	.count { width: 51px; text-align: center; }
	.pager .sheet-tab { width: 62px; height: 23px; background: #fff; border: 1px solid #c8c8d8; border-top: none; box-sizing: border-box; }

	footer { display: flex; align-items: stretch; height: 20px; flex: none; justify-content: flex-end; gap: 1px; }
	.snap { padding: 2px 3px 0; border: 1px solid transparent; margin-right: 1px; }
	.snap.pressed { background: #ececec; border-color: #bbb #eee #eee #bbb; }
	.cell { width: 75px; box-sizing: border-box; border-left: 1px solid #d4d4d4; padding: 4px 4px 0; white-space: nowrap; }
	.mode { width: 104px; }
	.gap { width: 105px; }
	.system { width: 155px; }
	.plane { width: 65px; }
	.end { width: 18px; background: radial-gradient(circle, #bbb 1px, transparent 1px) 4px 8px / 4px 4px; }
</style>
